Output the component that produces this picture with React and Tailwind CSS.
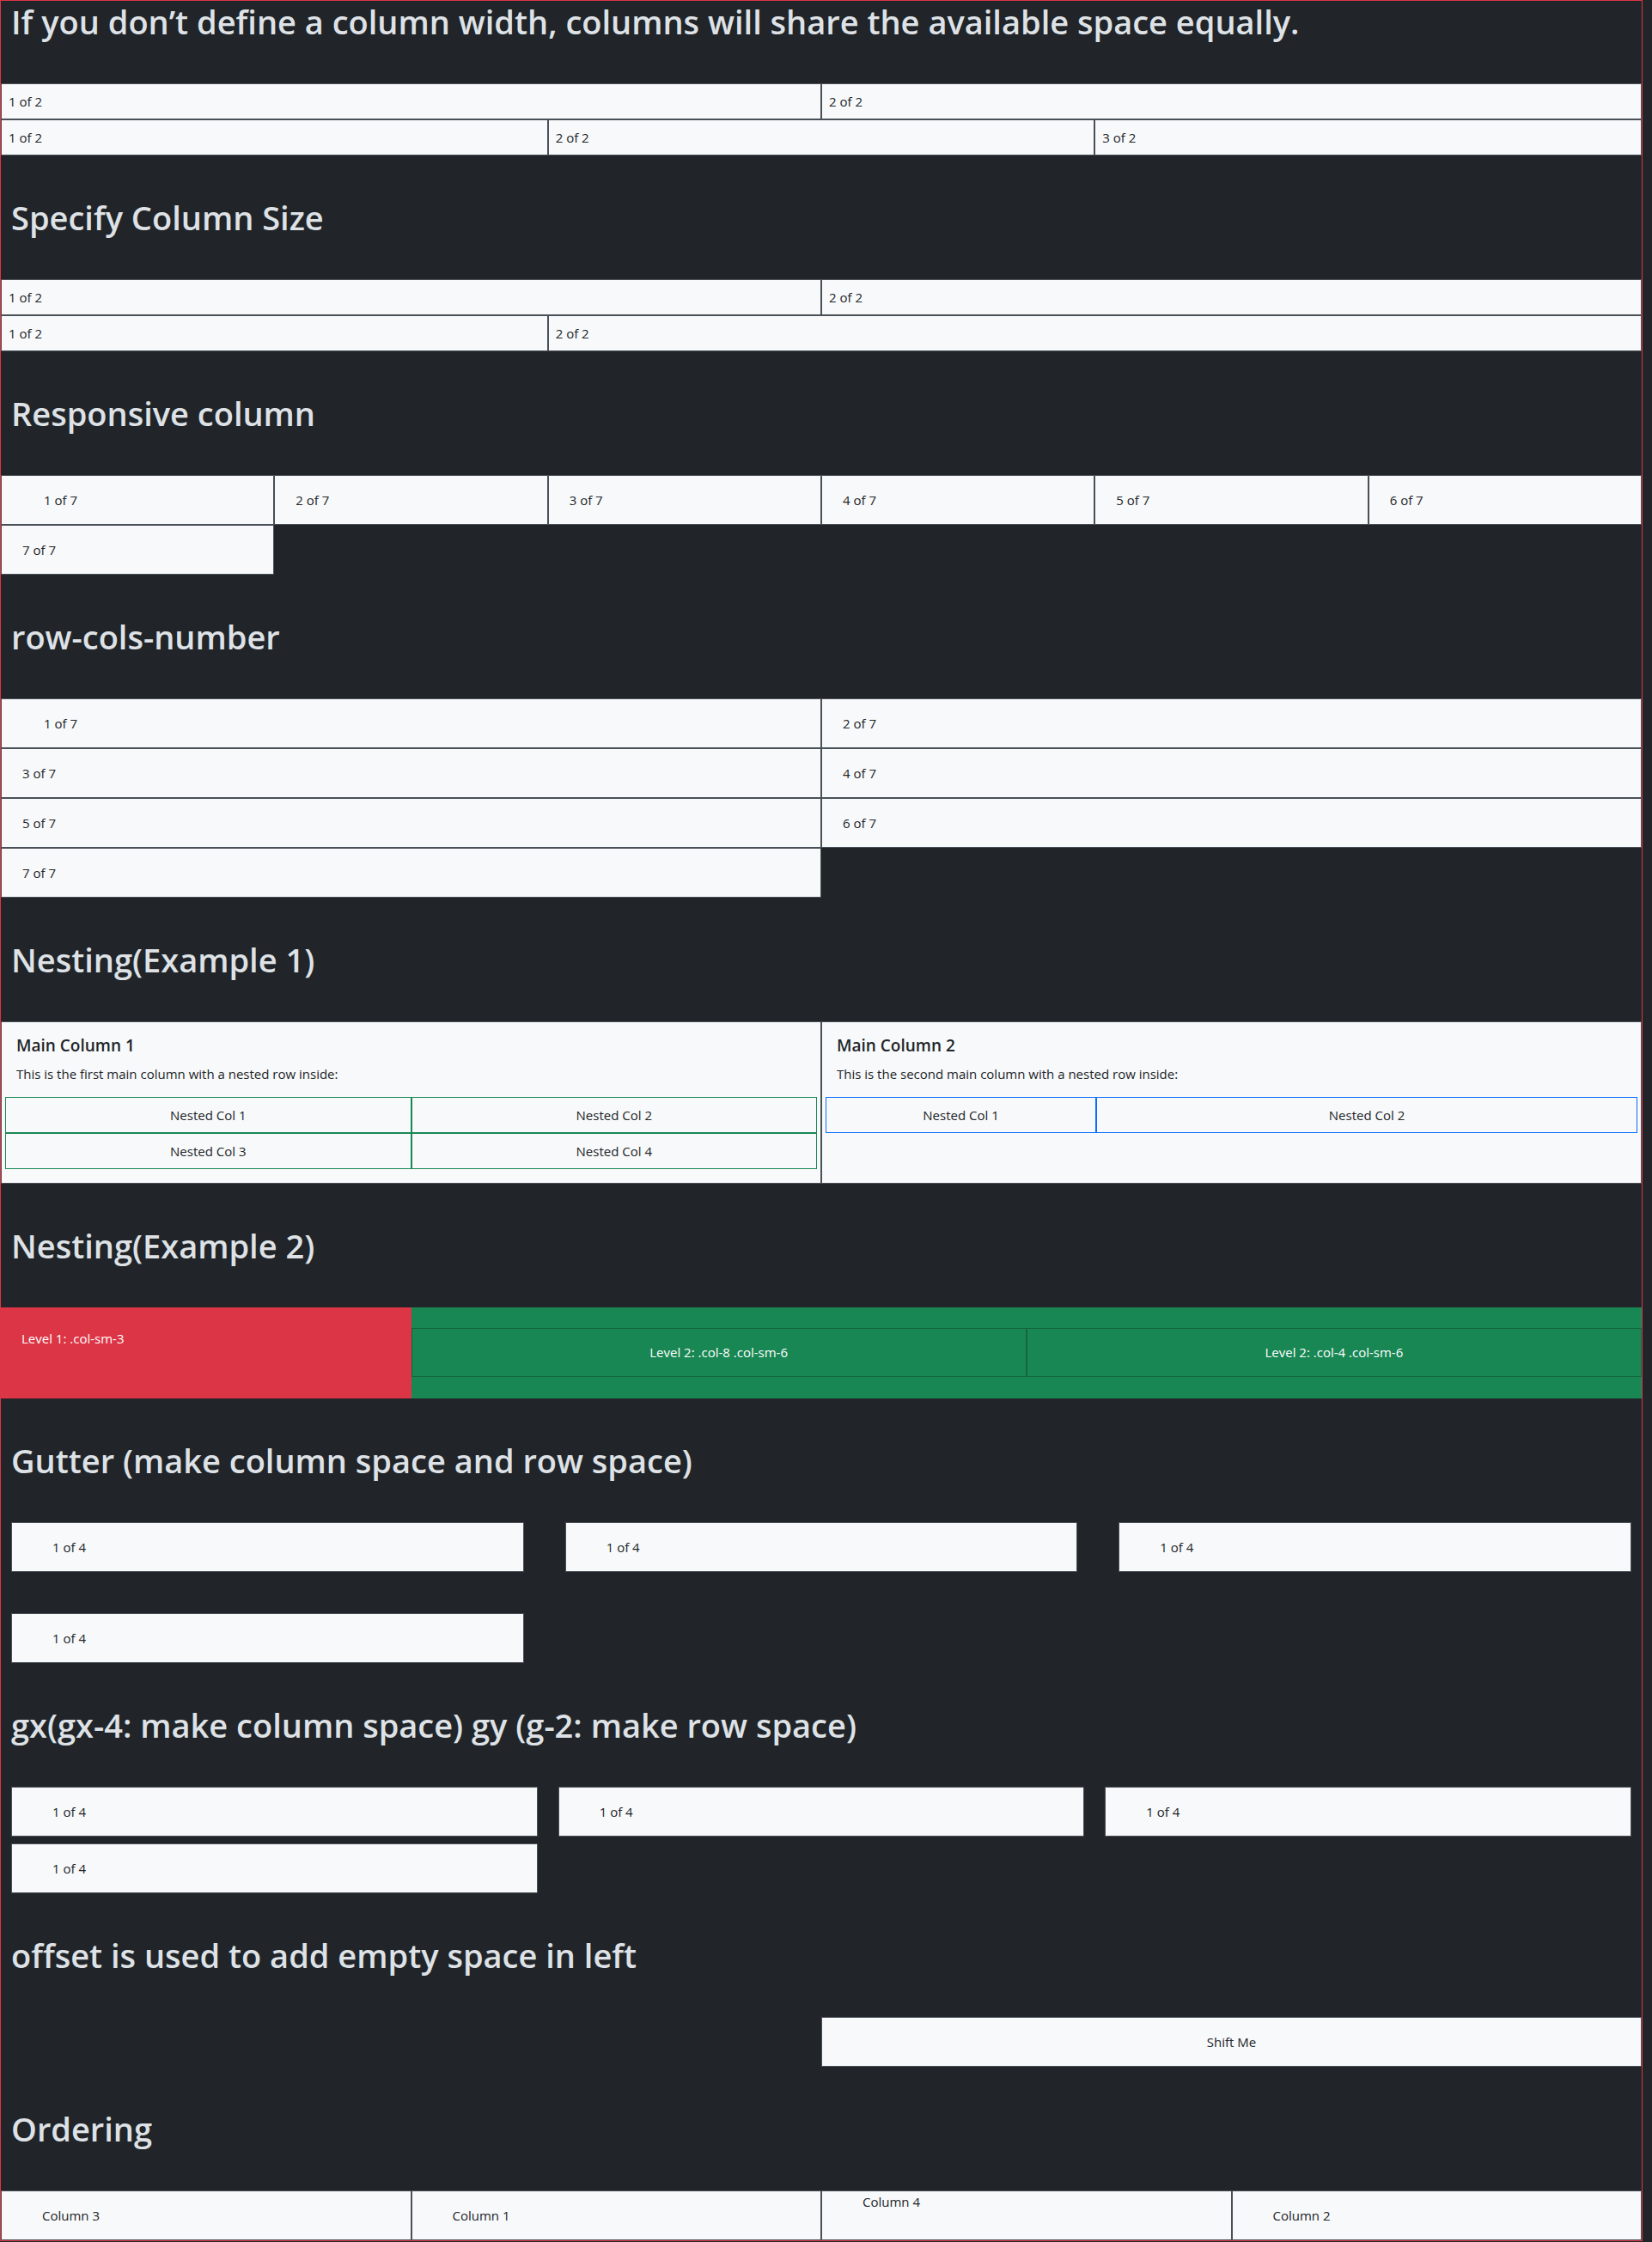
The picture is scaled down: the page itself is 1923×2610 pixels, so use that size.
const Heading = ({ children, first }) => {
  return (
    <h1
      className={`${first ? "mt-0" : "mt-12"} mb-12 h-12 px-3 whitespace-nowrap text-[38px] leading-[48px] font-semibold text-[#dee2e6]`}
    >
      {children}
    </h1>
  );
};

const Cell = ({ children, className = "" }) => {
  return (
    <div
      className={`border border-[#495057] bg-[#f8f9fa] text-[15px] leading-6 text-[#212529] ${className}`}
    >
      {children}
    </div>
  );
};

const NestedCell = ({ children, color }) => {
  return (
    <div
      className={`border ${color} py-2 text-center text-[15px] leading-6 text-[#212529]`}
    >
      {children}
    </div>
  );
};

const App = () => {
  const responsive = ["1 of 7", "2 of 7", "3 of 7", "4 of 7", "5 of 7", "6 of 7", "7 of 7"];

  return (
    <div className="min-h-screen bg-[#212529] font-['Open_Sans',sans-serif]">
      <div className="w-[1912px] border border-[#dc3545]">
        {/* equal width */}
        <Heading first>
          If you don’t define a column width, columns will share the available space equally.
        </Heading>
        <div className="grid grid-cols-2">
          <Cell className="px-2 py-2">1 of 2</Cell>
          <Cell className="px-2 py-2">2 of 2</Cell>
        </div>
        <div className="grid grid-cols-3">
          <Cell className="px-2 py-2">1 of 2</Cell>
          <Cell className="px-2 py-2">2 of 2</Cell>
          <Cell className="px-2 py-2">3 of 2</Cell>
        </div>

        {/* column size */}
        <Heading>Specify Column Size</Heading>
        <div className="grid grid-cols-2">
          <Cell className="px-2 py-2">1 of 2</Cell>
          <Cell className="px-2 py-2">2 of 2</Cell>
        </div>
        <div className="grid grid-cols-3">
          <Cell className="px-2 py-2">1 of 2</Cell>
          <Cell className="col-span-2 px-2 py-2">2 of 2</Cell>
        </div>

        {/* responsive */}
        <Heading>Responsive column</Heading>
        <div className="grid grid-cols-6">
          {responsive.map((r, i) => (
            <Cell key={r} className={`py-4 ${i === 0 ? "pl-[49px]" : "pl-6"}`}>
              {r}
            </Cell>
          ))}
        </div>

        {/* row cols */}
        <Heading>row-cols-number</Heading>
        <div className="grid grid-cols-2">
          {responsive.map((r, i) => (
            <Cell key={r} className={`py-4 ${i === 0 ? "pl-[49px]" : "pl-6"}`}>
              {r}
            </Cell>
          ))}
        </div>

        {/* nesting 1 */}
        <Heading>Nesting(Example 1)</Heading>
        <div className="grid grid-cols-2">
          <Cell className="px-1 pt-4 pb-4">
            <h5 className="mb-[10px] px-[13px] text-[19px] leading-[23px] font-semibold">Main Column 1</h5>
            <p className="mb-4 px-[13px] text-[15px] leading-[22px]">
              This is the first main column with a nested row inside:
            </p>
            <div className="grid grid-cols-2">
              <NestedCell color="border-[#198754]">Nested Col 1</NestedCell>
              <NestedCell color="border-[#198754]">Nested Col 2</NestedCell>
              <NestedCell color="border-[#198754]">Nested Col 3</NestedCell>
              <NestedCell color="border-[#198754]">Nested Col 4</NestedCell>
            </div>
          </Cell>
          <Cell className="px-1 pt-4 pb-4">
            <h5 className="mb-[10px] px-[13px] text-[19px] leading-[23px] font-semibold">Main Column 2</h5>
            <p className="mb-4 px-[13px] text-[15px] leading-[22px]">
              This is the second main column with a nested row inside:
            </p>
            <div className="grid grid-cols-3">
              <NestedCell color="border-[#0d6efd]">Nested Col 1</NestedCell>
              <div className="col-span-2">
                <NestedCell color="border-[#0d6efd]">Nested Col 2</NestedCell>
              </div>
            </div>
          </Cell>
        </div>

        {/* nesting 2 */}
        <Heading>Nesting(Example 2)</Heading>
        <div className="grid h-[106px] grid-cols-4">
          <div className="bg-[#dc3545] pl-6 pt-[26px] text-[15px] leading-[21px] text-white">
            Level 1: .col-sm-3
          </div>
          <div className="col-span-3 bg-[#198754] py-[24px]">
            <div className="grid grid-cols-2">
              <div className="flex h-[57px] items-center justify-center border border-[#13653f] text-[15px] text-white">
                Level 2: .col-8 .col-sm-6
              </div>
              <div className="flex h-[57px] items-center justify-center border border-[#13653f] text-[15px] text-white">
                Level 2: .col-4 .col-sm-6
              </div>
            </div>
          </div>
        </div>

        {/* gutter */}
        <Heading>Gutter (make column space and row space)</Heading>
        <div className="grid grid-cols-3 gap-12 px-3">
          <Cell className="py-4 pl-[47px]">1 of 4</Cell>
          <Cell className="py-4 pl-[47px]">1 of 4</Cell>
          <Cell className="py-4 pl-[47px]">1 of 4</Cell>
          <Cell className="py-4 pl-[47px]">1 of 4</Cell>
        </div>

        <Heading>gx(gx-4: make column space) gy (g-2: make row space)</Heading>
        <div className="grid grid-cols-3 gap-x-6 gap-y-2 px-3">
          <Cell className="py-4 pl-[47px]">1 of 4</Cell>
          <Cell className="py-4 pl-[47px]">1 of 4</Cell>
          <Cell className="py-4 pl-[47px]">1 of 4</Cell>
          <Cell className="py-4 pl-[47px]">1 of 4</Cell>
        </div>

        {/* offset */}
        <Heading>offset is used to add empty space in left</Heading>
        <div className="grid grid-cols-2">
          <Cell className="col-start-2 py-4 text-center">Shift Me</Cell>
        </div>

        {/* ordering */}
        <Heading>Ordering</Heading>
        <div className="grid grid-cols-4">
          <Cell className="py-4 pl-[47px]">Column 3</Cell>
          <Cell className="py-4 pl-[47px]">Column 1</Cell>
          <Cell className="pb-8 pl-[47px]">Column 4</Cell>
          <Cell className="py-4 pl-[47px]">Column 2</Cell>
        </div>
      </div>
    </div>
  );
};

export default App;
